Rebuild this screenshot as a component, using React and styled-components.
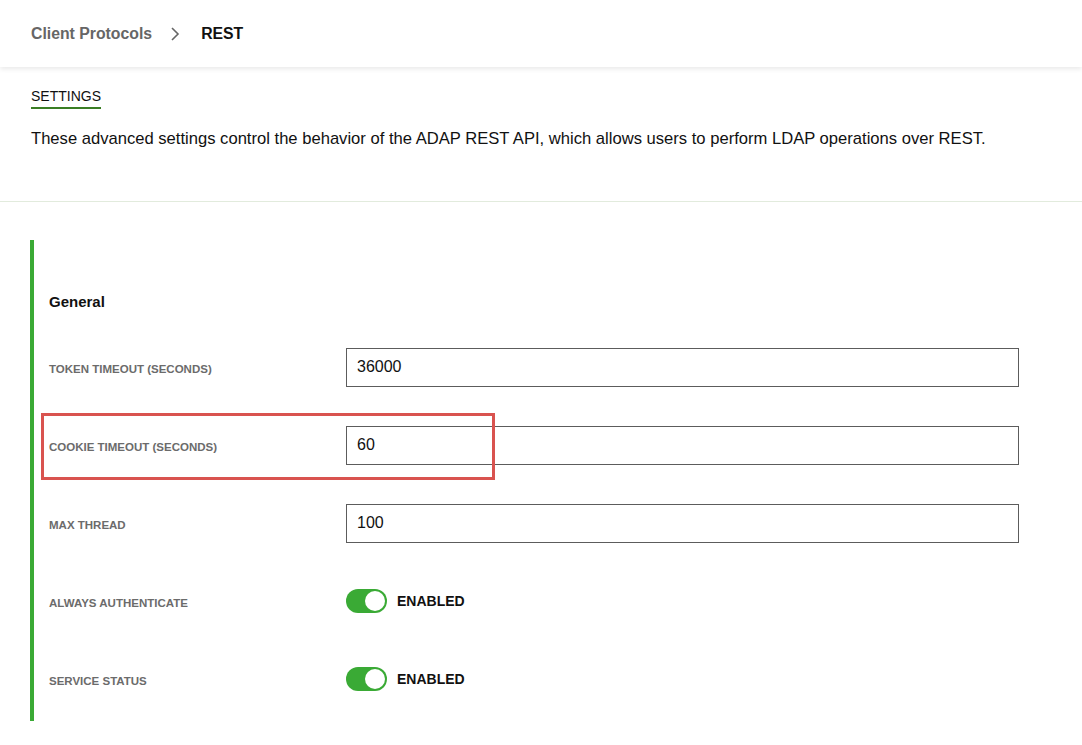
import React from 'react';
import styled, { createGlobalStyle } from 'styled-components';

const GlobalStyle = createGlobalStyle`
    body {
        margin: 0;
        background: #fff;
        font-family: 'Liberation Sans', Arial, sans-serif;
        color: #111;
    }
`

const fields = [
    { label: 'Token Timeout (Seconds)', value: '36000' },
    { label: 'Cookie Timeout (Seconds)', value: '60', marked: true },
    { label: 'Max Thread', value: '100' },
    { label: 'Always Authenticate', toggle: true },
    { label: 'Service Status', toggle: true },
];

export default function App() {
    return (
        <>
            <GlobalStyle />
            <Header>
                <Crumb>Client Protocols</Crumb>
                <Chevron viewBox="0 0 10 16">
                    <path d="M2 2 L8 8 L2 14" fill="none" stroke="#666" strokeWidth="1.6" />
                </Chevron>
                <Crumb current>REST</Crumb>
            </Header>
            <Intro>
                <Tab>SETTINGS</Tab>
                <Description>
                    These advanced settings control the behavior of the ADAP REST API, which allows users to perform LDAP operations over REST.
                </Description>
            </Intro>
            <Content>
                <Panel>
                    <Heading>General</Heading>
                    {fields.map(f => (
                        <Row key={f.label}>
                            <Label>{f.label}</Label>
                            {f.toggle ? (
                                <ToggleWrap>
                                    <Switch><Knob /></Switch>
                                    <ToggleText>ENABLED</ToggleText>
                                </ToggleWrap>
                            ) : (
                                <Input defaultValue={f.value} />
                            )}
                            {f.marked && <Marker />}
                        </Row>
                    ))}
                </Panel>
            </Content>
        </>
    )
}

const Header = styled.div`
    height: 67px;
    display: flex;
    align-items: center;
    padding-left: 31px;
    box-shadow: 0 2px 5px rgba(0, 0, 0, 0.09);
    position: relative;
`

const Crumb = styled.span`
    font-size: 15.8px;
    font-weight: 700;
    color: ${p => p.current ? '#111' : '#666'};
`

const Chevron = styled.svg`
    width: 10px;
    height: 16px;
    margin: 0 21px 0 18px;
`

const Intro = styled.div`
    padding: 20px 31px 0;
    height: 114px;
    border-bottom: 1px solid #e2ebdd;
`

const Tab = styled.div`
    display: inline-block;
    font-size: 14px;
    color: #111;
    padding-bottom: 3px;
    border-bottom: 2px solid #3a7d24;
`

const Description = styled.p`
    margin: 20px 0 0;
    font-size: 16.6px;
    color: #111;
`

const Content = styled.div`
    padding: 38px 0 0 30px;
`

const Panel = styled.div`
    border-left: 4px solid #3aaa35;
    padding: 51px 0 3px 15px;
    width: 985px;
    box-sizing: border-box;
`

const Heading = styled.div`
    font-size: 15px;
    font-weight: 700;
    line-height: 22px;
    margin-bottom: 15px;
`

const Row = styled.div`
    position: relative;
    height: 78px;
    display: grid;
    grid-template-columns: 297px 673px;
    align-items: center;
`

const Label = styled.div`
    font-size: 11.5px;
    font-weight: 700;
    text-transform: uppercase;
    color: #6b6b6b;
    padding-top: 3px;
`

const Input = styled.input`
    height: 39px;
    box-sizing: border-box;
    border: 1px solid #5c5c5c;
    padding: 0 10px;
    font-family: inherit;
    font-size: 16px;
    color: #111;
    outline: none;
`

const ToggleWrap = styled.div`
    display: flex;
    align-items: center;
    gap: 10px;
`

const Switch = styled.div`
    width: 41px;
    height: 24px;
    border-radius: 12px;
    background: #3aaa35;
    display: flex;
    align-items: center;
    justify-content: flex-end;
    padding: 0 2px;
    box-sizing: border-box;
`

const Knob = styled.div`
    width: 20px;
    height: 20px;
    border-radius: 50%;
    background: #fff;
`

const ToggleText = styled.span`
    font-size: 14px;
    font-weight: 700;
    color: #111;
`

const Marker = styled.div`
    position: absolute;
    left: -8px;
    top: 7px;
    width: 454px;
    height: 67px;
    box-sizing: border-box;
    border: 3px solid #d9534f;
    pointer-events: none;
`
